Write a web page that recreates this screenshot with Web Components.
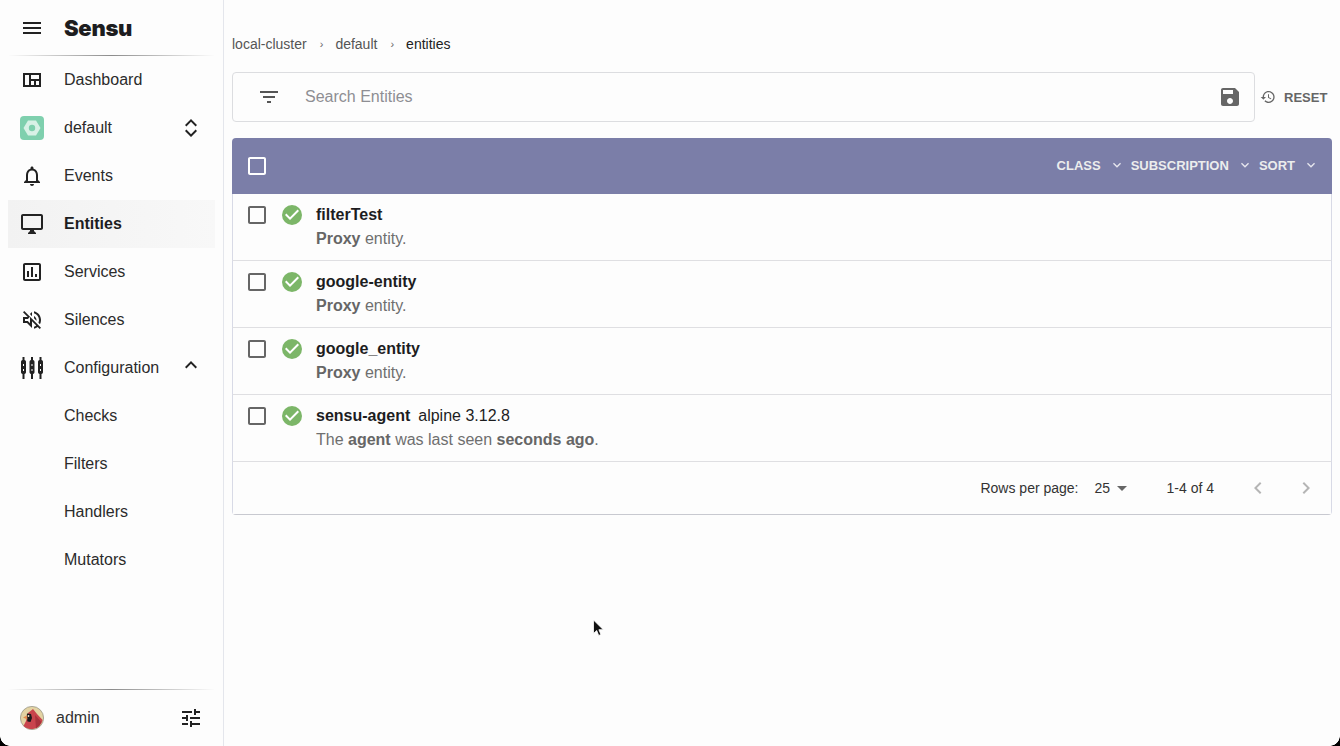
<!DOCTYPE html>
<html>
<head>
<meta charset="utf-8">
<title>Entities</title>
<style>
  html, body { margin: 0; height: 100%; background: #fdfdfd; overflow: hidden; }
  body { font-family: "Liberation Sans", Arial, sans-serif; color: #222; }
</style>
</head>
<body>
<app-shell>
  <side-bar slot="side">
    <nav-item icon="dashboard">Dashboard</nav-item>
    <nav-item>
      <name-space slot="icon"></name-space>
      default
      <ui-icon slot="end" name="unfold"></ui-icon>
    </nav-item>
    <nav-item icon="bell">Events</nav-item>
    <nav-item icon="desktop" active>Entities</nav-item>
    <nav-item icon="services">Services</nav-item>
    <nav-item icon="silence">Silences</nav-item>
    <nav-item icon="config">
      Configuration
      <ui-icon slot="end" name="less" style="margin-top: -6px"></ui-icon>
    </nav-item>
    <nav-item>Checks</nav-item>
    <nav-item>Filters</nav-item>
    <nav-item>Handlers</nav-item>
    <nav-item>Mutators</nav-item>
  </side-bar>
  <bread-crumbs>
    <span>local-cluster</span>
    <span>default</span>
    <span>entities</span>
  </bread-crumbs>
  <search-bar placeholder="Search Entities"></search-bar>
  <entity-list>
    <entity-row name="filterTest"><b>Proxy</b> entity.</entity-row>
    <entity-row name="google-entity"><b>Proxy</b> entity.</entity-row>
    <entity-row name="google_entity"><b>Proxy</b> entity.</entity-row>
    <entity-row name="sensu-agent" os="alpine 3.12.8">The <b>agent</b> was last seen <b>seconds ago</b>.</entity-row>
  </entity-list>
</app-shell>
<mouse-cursor></mouse-cursor>

<script>
const ICONS = {
  menu: 'M3 18h18v-2H3v2zm0-5h18v-2H3v2zm0-7v2h18V6H3z',
  dashboard: 'M3 5h18v14H3zM5 7v10h4V7zm6 0v4h8V7zm0 6v4h3v-4zm5 0v4h3v-4z',
  bell: 'M12 22c1.1 0 2-.9 2-2h-4c0 1.1.9 2 2 2zm6-6v-5c0-3.07-1.63-5.64-4.5-6.32V4c0-.83-.67-1.5-1.5-1.5s-1.5.67-1.5 1.5v.68C7.64 5.36 6 7.92 6 11v5l-2 2v1h16v-1l-2-2zm-2 1H8v-6c0-2.48 1.51-4.5 4-4.5s4 2.02 4 4.5v6z',
  desktop: 'M21 2H3c-1.1 0-2 .9-2 2v12c0 1.1.9 2 2 2h7v1l-2 2v1h8v-1l-2-2v-1h7c1.1 0 2-.9 2-2V4c0-1.1-.9-2-2-2zm0 14H3V4h18v12z',
  services: 'M19 3H5c-1.1 0-2 .9-2 2v14c0 1.1.9 2 2 2h14c1.1 0 2-.9 2-2V5c0-1.1-.9-2-2-2zm0 16H5V5h14v14zM7 11h2v6H7zm4-4h2v10h-2zm4 7h2v3h-2z',
  silence: 'M16.5 12c0-1.77-1.02-3.29-2.5-4.03v2.21l2.45 2.45c.03-.2.05-.41.05-.63zm2.5 0c0 .94-.2 1.82-.54 2.64l1.51 1.51C20.63 14.91 21 13.5 21 12c0-4.28-2.99-7.86-7-8.77v2.06c2.89.86 5 3.54 5 6.71zM4.27 3L3 4.27 7.73 9H3v6h4l5 5v-6.73l4.25 4.25c-.67.52-1.42.93-2.25 1.18v2.06c1.38-.31 2.63-.95 3.69-1.81L19.73 21 21 19.73l-9-9L4.27 3zM12 4L9.91 6.09 12 8.18V4zm-2 4.8L7.9 11H5v2h2.8l2.2 2.2z',
  config: 'M2.5 1h2v3c1 .3 1.5 1 1.5 2v10c0 1-.5 1.700-1.500 2v5h-2v-5C1.500 17.700 1 17 1 16V6c0-1 .5-1.700 1.500-2zM3 8v2h1V8zm0 5v2h1v-2zM11 1h2v3c1 .3 1.500 1 1.500 2v10c0 1-.5 1.700-1.500 2v5h-2v-5c-1-.3-1.500-1-1.500-2V6c0-1 .5-1.700 1.500-2zm.5 7v2h1V8zm0 5v2h1v-2zM19.500 1h2v3c1 .3 1.500 1 1.500 2v10c0 1-.5 1.700-1.500 2v5h-2v-5c-1-.3-1.500-1-1.500-2V6c0-1 .5-1.700 1.500-2zM20 8v2h1V8zm0 5v2h1v-2z',
  less: 'M12 8l-6 6 1.41 1.41L12 10.83l4.59 4.58L18 14z',
  more: 'M16.59 8.59L12 13.17 7.41 8.59 6 10l6 6 6-6z',
  unfold: 'M12 3l6 6-1.400 1.400L12 5.800l-4.600 4.600L6 9zM12 21l-6-6 1.400-1.400 4.600 4.600 4.600-4.600L18 15z',
  tune: 'M3 17v2h6v-2H3zM3 5v2h10V5H3zm10 16v-2h8v-2h-8v-2h-2v6h2zM7 9v2H3v2h4v2h2V9H7zm14 4v-2H11v2h10zm-6-4h2V7h4V5h-4V3h-2v6z',
  filter: 'M10 18h4v-2h-4v2zM3 6v2h18V6H3zm3 7h12v-2H6v2z',
  save: 'M17 3H5c-1.110 0-2 .9-2 2v14c0 1.100.89 2 2 2h14c1.100 0 2-.9 2-2V7l-4-4zm-5 16c-1.660 0-3-1.340-3-3s1.340-3 3-3 3 1.340 3 3-1.340 3-3 3zm3-10H5V5h10v4z',
  restore: 'M13 3c-4.970 0-9 4.030-9 9H1l3.890 3.890.07.14L9 12H6c0-3.870 3.130-7 7-7s7 3.130 7 7-3.130 7-7 7c-1.930 0-3.680-.79-4.940-2.060l-1.420 1.420C8.270 19.990 10.510 21 13 21c4.970 0 9-4.030 9-9s-4.030-9-9-9zm-1 5v5l4.280 2.540.72-1.210-3.500-2.080V8H12z',
  box: 'M19 5v14H5V5h14m0-2H5c-1.100 0-2 .9-2 2v14c0 1.100.9 2 2 2h14c1.100 0 2-.9 2-2V5c0-1.100-.9-2-2-2z',
  arrow: 'M7 10l5 5 5-5z',
  prev: 'M15.410 7.410L14 6l-6 6 6 6 1.410-1.410L10.830 12z',
  next: 'M10 6L8.590 7.410 13.170 12l-4.580 4.590L10 18l6-6z'
}

// single svg icon, size and colour come from attributes
class UiIcon extends HTMLElement {
  connectedCallback () {
    const size = this.getAttribute('size') || 24
    const color = this.getAttribute('color') || 'currentColor'
    this.attachShadow({ mode: 'open' }).innerHTML = `
      <style>:host { display: inline-flex; width: ${size}px; height: ${size}px; flex: none; }</style>
      <svg width="${size}" height="${size}" viewBox="0 0 24 24">
        <path fill="${color}" fill-rule="evenodd" d="${ICONS[this.getAttribute('name')]}"/>
      </svg>`
  }
}
customElements.define('ui-icon', UiIcon)

const shellTemplate = document.createElement('template')
shellTemplate.innerHTML = `
  <style>
    :host { display: flex; height: 100vh; }
    main { flex: 1; min-width: 0; padding: 32px 8px 0; }
  </style>
  <slot name="side"></slot>
  <main><slot></slot></main>
`
class AppShell extends HTMLElement {
  constructor () {
    super()
    this.attachShadow({ mode: 'open' })
    this.shadowRoot.appendChild(shellTemplate.content.cloneNode(true))
  }
}
customElements.define('app-shell', AppShell)

const sideTemplate = document.createElement('template')
sideTemplate.innerHTML = `
  <style>
    :host {
      display: flex;
      flex-direction: column;
      width: 223px;
      flex: none;
      border-right: 1px solid #e4e6ec;
      box-sizing: content-box;
    }
    header { display: flex; align-items: center; height: 55px; }
    .burger { width: 48px; margin-left: 8px; display: flex; justify-content: center; color: #222; }
    .logo {
      margin-left: 8px;
      font: 900 22px/1 Inter, "Liberation Sans", sans-serif;
      letter-spacing: -0.3px;
      color: #1d1d1f;
    }
    hr {
      height: 1px;
      border: 0;
      margin: 0 8px;
      flex: none;
      background: linear-gradient(90deg, rgba(120,120,120,0), rgba(120,120,120,.85) 50%, rgba(120,120,120,0));
    }
    .list { flex: 1; }
    footer { display: flex; align-items: center; height: 56px; padding: 0 20px; color: #333; font-size: 16px; }
    .name { margin-left: 12px; flex: 1; }
    .tune { color: #222; }
  </style>
  <header>
    <span class="burger"><ui-icon name="menu"></ui-icon></span>
    <span class="logo">Sensu</span>
  </header>
  <hr>
  <div class="list"><slot></slot></div>
  <hr>
  <footer>
    <svg width="24" height="24" viewBox="0 0 24 24">
      <circle cx="12" cy="12" r="11.600" fill="#e3d3a3" stroke="#8d8d80" stroke-width=".7"/>
      <path fill="#c9444c" d="M13 3l4 5 5.600 6A11.600 11.600 0 0 1 3.500 20L6 15l2-8z"/>
      <path fill="#a8323c" d="M15 9l6.500 7A11.600 11.600 0 0 1 16 22.500z"/>
      <path fill="#1c1b1d" d="M7 7.500l4 .5 1 4-1.500 4-3-.5-.9-4z"/>
      <path fill="#e58a4d" d="M3 11.500l4-2 .5 4z"/>
      <circle cx="8.500" cy="10" r=".9" fill="#f4e7cf"/>
    </svg>
    <span class="name">admin</span>
    <ui-icon class="tune" name="tune"></ui-icon>
  </footer>
`
class SideBar extends HTMLElement {
  constructor () {
    super()
    this.attachShadow({ mode: 'open' })
    this.shadowRoot.appendChild(sideTemplate.content.cloneNode(true))
  }
}
customElements.define('side-bar', SideBar)

const navTemplate = document.createElement('template')
navTemplate.innerHTML = `
  <style>
    :host {
      display: flex;
      align-items: center;
      height: 48px;
      margin: 0 8px;
      font-size: 16px;
      color: #2b2b2b;
    }
    :host([active]) {
      background: linear-gradient(90deg, #f2f2f2, #f8f8f8);
      font-weight: 700;
      color: #1d1d1f;
    }
    .icon { width: 48px; display: flex; justify-content: center; flex: none; color: #222; margin-right: 8px; }
    .label { flex: 1; white-space: nowrap; }
    .end { width: 48px; display: flex; justify-content: center; flex: none; color: #222; }
  </style>
  <span class="icon"><slot name="icon"></slot></span>
  <span class="label"><slot></slot></span>
  <span class="end"><slot name="end"></slot></span>
`
class NavItem extends HTMLElement {
  constructor () {
    super()
    this.attachShadow({ mode: 'open' })
    this.shadowRoot.appendChild(navTemplate.content.cloneNode(true))
  }

  connectedCallback () {
    const name = this.getAttribute('icon')
    if (name && !this.querySelector('[slot=icon]')) {
      const icon = document.createElement('ui-icon')
      icon.setAttribute('name', name)
      icon.slot = 'icon'
      this.appendChild(icon)
    }
  }
}
customElements.define('nav-item', NavItem)

const spaceTemplate = document.createElement('template')
spaceTemplate.innerHTML = `
  <style>
    :host { display: flex; width: 24px; height: 24px; border-radius: 4px; background: #7fd0ae; align-items: center; justify-content: center; }
  </style>
  <svg width="18" height="18" viewBox="0 0 18 18">
    <path fill="#d8f1e6" d="M5 1.500h8L17.500 9 13 16.500H5L.5 9z"/>
    <circle cx="9" cy="9" r="3.200" fill="#7fd0ae"/>
  </svg>
`
class NameSpace extends HTMLElement {
  constructor () {
    super()
    this.attachShadow({ mode: 'open' })
    this.shadowRoot.appendChild(spaceTemplate.content.cloneNode(true))
  }
}
customElements.define('name-space', NameSpace)

const crumbTemplate = document.createElement('template')
crumbTemplate.innerHTML = `
  <style>
    :host { display: flex; align-items: center; height: 24px; font-size: 14px; color: #555; }
    ::slotted(span) { display: inline-flex; align-items: center; }
    ::slotted(span:not(:last-child))::after { content: '\\203A'; margin: 0 12px 0 13px; font-size: 11px; color: #666; }
    ::slotted(span:last-child) { color: #222; }
  </style>
  <slot></slot>
`
class BreadCrumbs extends HTMLElement {
  constructor () {
    super()
    this.attachShadow({ mode: 'open' })
    this.shadowRoot.appendChild(crumbTemplate.content.cloneNode(true))
  }
}
customElements.define('bread-crumbs', BreadCrumbs)

const searchTemplate = document.createElement('template')
searchTemplate.innerHTML = `
  <style>
    :host { display: flex; align-items: center; margin-top: 16px; height: 50px; }
    .box {
      flex: 1;
      display: flex;
      align-items: center;
      height: 100%;
      box-sizing: border-box;
      border: 1px solid #dcdde0;
      border-radius: 4px;
      padding: 0 12px 0 24px;
    }
    .text { flex: 1; margin-left: 24px; font-size: 16px; color: #8e8e93; }
    .reset {
      display: flex;
      align-items: center;
      gap: 8px;
      width: 72px;
      margin-left: 5px;
      font-size: 13px;
      font-weight: 700;
      color: #666;
    }
  </style>
  <div class="box">
    <ui-icon name="filter" color="#555"></ui-icon>
    <span class="text"></span>
    <ui-icon name="save" color="#666"></ui-icon>
  </div>
  <div class="reset"><ui-icon name="restore" size="16" color="#666"></ui-icon>RESET</div>
`
class SearchBar extends HTMLElement {
  constructor () {
    super()
    this.attachShadow({ mode: 'open' })
    this.shadowRoot.appendChild(searchTemplate.content.cloneNode(true))
    this.shadowRoot.querySelector('.text').textContent = this.getAttribute('placeholder')
  }
}
customElements.define('search-bar', SearchBar)

const listTemplate = document.createElement('template')
listTemplate.innerHTML = `
  <style>
    :host {
      display: block;
      margin-top: 16px;
      box-sizing: border-box;
      border-radius: 4px;
      overflow: hidden;
      font-size: 14px;
      --edge: #d8dae6;
    }
    .head {
      display: flex;
      align-items: center;
      height: 56px;
      background: #7b7ea8;
      color: #eceded;
      padding: 0 13px;
      font-size: 13px;
      font-weight: 700;
    }
    .head .grow { flex: 1; }
    .head .drop { display: flex; align-items: center; margin-bottom: 2px; }
    .head .drop ui-icon { margin-left: 8px; }
    .head .drop + .drop { margin-left: 6px; }
    .foot {
      display: flex;
      align-items: center;
      justify-content: flex-end;
      box-sizing: border-box;
      height: 53px;
      color: #333;
      border-left: 1px solid var(--edge);
      border-right: 1px solid var(--edge);
      border-bottom: 1px solid #c8c9d0;
    }
    .rows { margin-right: 16px; }
    .select { display: flex; align-items: center; width: 64px; margin-right: 8px; }
    .range { margin-right: 32px; }
    .pager { display: flex; gap: 24px; padding-right: 13px; }
  </style>
  <div class="head">
    <ui-icon name="box" color="#fff"></ui-icon>
    <span class="grow"></span>
    <span class="drop">CLASS<ui-icon name="more" size="16" color="#e6e6ee"></ui-icon></span>
    <span class="drop">SUBSCRIPTION<ui-icon name="more" size="16" color="#e6e6ee"></ui-icon></span>
    <span class="drop">SORT<ui-icon name="more" size="16" color="#e6e6ee"></ui-icon></span>
  </div>
  <slot></slot>
  <div class="foot">
    <span class="rows">Rows per page:</span>
    <span class="select">25<ui-icon name="arrow" size="24" color="#666"></ui-icon></span>
    <span class="range">1-4 of 4</span>
    <span class="pager">
      <ui-icon name="prev" color="#b5b5b5"></ui-icon>
      <ui-icon name="next" color="#b5b5b5"></ui-icon>
    </span>
  </div>
`
class EntityList extends HTMLElement {
  constructor () {
    super()
    this.attachShadow({ mode: 'open' })
    this.shadowRoot.appendChild(listTemplate.content.cloneNode(true))
  }
}
customElements.define('entity-list', EntityList)

const rowTemplate = document.createElement('template')
rowTemplate.innerHTML = `
  <style>
    :host {
      display: flex;
      align-items: flex-start;
      box-sizing: border-box;
      height: 67px;
      padding: 8px 0 0 12px;
      border-left: 1px solid var(--edge);
      border-right: 1px solid var(--edge);
      border-bottom: 1px solid #dfdfe2;
      font-size: 16px;
      line-height: 24px;
    }
    .check { color: #666; margin-top: 1px; margin-right: 11px; }
    .status { margin-top: 1px; margin-right: 12px; flex: none; }
    .text { margin-top: 1px; }
    .title { color: #1d1d1f; }
    .title b { margin-right: 8px; }
    .sub { color: #6f6f6f; }
    ::slotted(b) { color: #666; }
  </style>
  <ui-icon class="check" name="box" color="#666"></ui-icon>
  <svg class="status" width="24" height="24" viewBox="0 0 24 24">
    <circle cx="12" cy="12" r="10" fill="#7cb668"/>
    <path fill="#fff" d="M10 17l-5-5 1.410-1.410L10 14.170l7.590-7.590L19 8z"/>
  </svg>
  <div class="text">
    <div class="title"><b></b><span class="os"></span></div>
    <div class="sub"><slot></slot></div>
  </div>
`
class EntityRow extends HTMLElement {
  constructor () {
    super()
    this.attachShadow({ mode: 'open' })
    this.shadowRoot.appendChild(rowTemplate.content.cloneNode(true))
    this.shadowRoot.querySelector('b').textContent = this.getAttribute('name')
    this.shadowRoot.querySelector('.os').textContent = this.getAttribute('os') || ''
  }
}
customElements.define('entity-row', EntityRow)

// the pointer and rounded window corners caught in the screenshot lie over everything
const cursorTemplate = document.createElement('template')
cursorTemplate.innerHTML = `
  <style>
    :host { position: fixed; inset: 0; pointer-events: none; }
    svg { position: absolute; left: 592px; top: 619px; }
    .corner { position: absolute; bottom: 0; width: 10px; height: 10px; }
    .bl { left: 0; background: radial-gradient(circle at 100% 0, transparent 9.500px, #000 10px); }
    .br { right: 0; background: radial-gradient(circle at 0 0, transparent 9.500px, #000 10px); }
  </style>
  <svg width="14" height="20" viewBox="0 0 14 20">
    <path fill="#111" stroke="#fff" stroke-width=".8" d="M1.500 1v13.500l3.200-3 2 5 2.200-1-2-4.800h4.400z"/>
  </svg>
  <div class="corner bl"></div>
  <div class="corner br"></div>
`
class MouseCursor extends HTMLElement {
  constructor () {
    super()
    this.attachShadow({ mode: 'open' })
    this.shadowRoot.appendChild(cursorTemplate.content.cloneNode(true))
  }
}
customElements.define('mouse-cursor', MouseCursor)
</script>
</body>
</html>
